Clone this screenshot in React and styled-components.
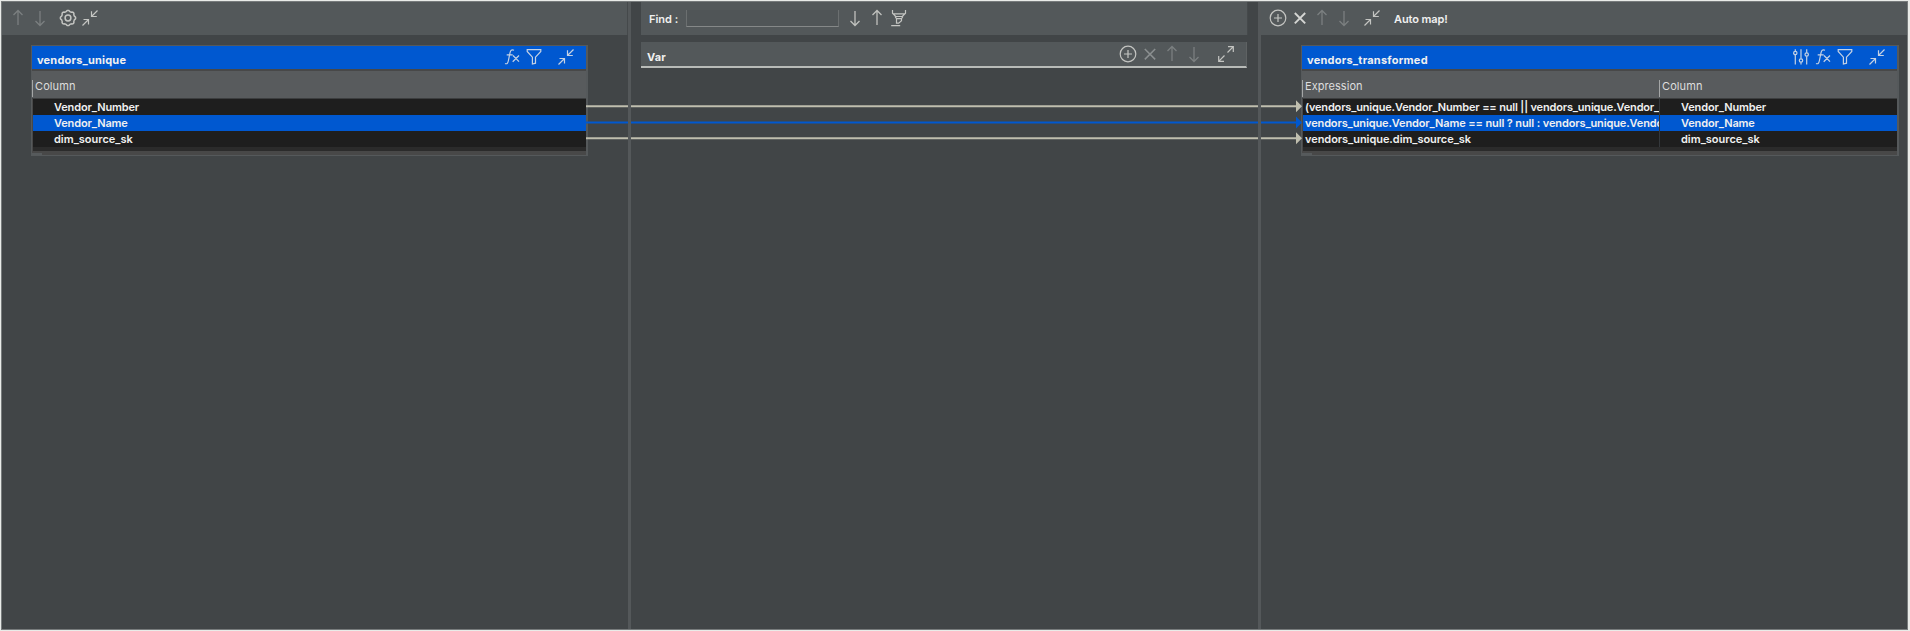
import React from 'react';
import styled, { createGlobalStyle } from 'styled-components';

const GlobalStyle = createGlobalStyle`
  * { box-sizing: border-box; }
  body {
    margin: 0;
    background: #eeeeee;
    font-family: Inter, "Liberation Sans", sans-serif;
    font-size: 11px;
    color: #f0f0f0;
  }
`;

const Frame = styled.div`
  width: 1910px;
  height: 631px;
  background: #e9ebe8;
  padding: 1px 2px 1px 1px;
`;

const Editor = styled.main`
  position: relative;
  display: flex;
  height: 629px;
  border: 1px solid #777b7c;
  background: #414547;
`;

const Pane = styled.section`
  width: ${(p) => p.$width}px;
  flex: none;
  padding: 0 ${(p) => p.$inset || 0}px;
`;

const Splitter = styled.div`
  position: relative;
  z-index: 2;
  width: 3px;
  flex: none;
  background: #54585a;
`;

const Toolbar = styled.header`
  display: flex;
  align-items: center;
  height: 33px;
  padding-left: ${(p) => p.$start}px;
  padding-bottom: 1px;
  background: #53585a;
  border-right: ${(p) => (p.$edge ? '1px solid #45494b' : 'none')};
`;

const Icon = styled.svg`
  flex: none;
  display: block;
  width: 18px;
  height: 18px;
  margin-left: ${(p) => p.$gap ?? 4}px;
  fill: none;
  stroke: ${(p) => p.$tone || '#c4c5c2'};
  stroke-width: ${(p) => p.$weight || 1.2};
`;

const Label = styled.span`
  font-weight: ${(p) => p.$weight || 500};
  letter-spacing: ${(p) => p.$track || 0}px;
  margin-left: ${(p) => p.$gap || 0}px;
  padding-top: ${(p) => p.$drop || 0}px;
  white-space: pre;
`;

const FindField = styled.input`
  width: 153px;
  height: 17px;
  margin: 0 0 0 8px;
  padding: 0 4px;
  background: #505557;
  color: inherit;
  border: 1px solid #6b6f70;
  border-top: 0;
  border-bottom-color: #858888;
  outline: none;
`;

const VarBar = styled.div`
  display: flex;
  align-items: center;
  height: 26px;
  margin: 7px 0 0;
  padding: 0 11px 0 6px;
  width: 606px;
  background: #53585a;
  border-bottom: 2px solid #b8bbb8;
  border-right: 1px solid #5e6263;
`;

const Spacer = styled.div`
  flex: 1;
`;

const Table = styled.div`
  width: ${(p) => p.$width}px;
  height: 111px;
  margin: 10px 0 0 ${(p) => p.$left}px;
  border: 1px solid #55595b;
  border-right-width: 2px;
  background: #484848;
`;

const TitleBar = styled.div`
  display: flex;
  align-items: center;
  height: 23px;
  padding: 0 11px 1px 5px;
  background: #0058d0;
`;

const HeadRow = styled.div`
  display: grid;
  grid-template-columns: ${(p) => p.$columns};
  height: 28px;
  margin-top: 2px;
  padding-top: 9px;
  background: #585b5d;
  border-bottom: 1px solid #3c3e3f;
`;

const HeadCell = styled.div`
  height: 17px;
  padding-left: 2px;
  line-height: 12px;
  border-left: 1px solid #a4a6a6;
  color: #dedede;
`;

const Rows = styled.div`
  height: 52px;
  margin-left: 1px;
  background: #2b2b2b;
`;

const Row = styled.div`
  display: grid;
  grid-template-columns: ${(p) => p.$columns};
  height: 16px;
  line-height: 17px;
  background: ${(p) => (p.$selected ? '#0058d0' : '#1e1e1e')};
`;

const Cell = styled.div`
  min-width: 0;
  overflow: hidden;
  white-space: nowrap;
  padding-left: ${(p) => p.$indent}px;
  border-right: ${(p) => (p.$divided ? '1px solid #34383c' : 'none')};
`;

const ScrollThumb = styled.div`
  width: 10px;
  height: 2px;
  margin-top: 2px;
  background: #565a5c;
`;

const Links = styled.svg`
  position: absolute;
  left: 584px;
  top: 96px;
  width: 718px;
  height: 50px;
  pointer-events: none;
`;

const Arrow = ({ down, dim, gap }) => (
  <Icon viewBox="0 0 18 18" $gap={gap} $tone={dim ? '#7b7f80' : '#c0c1be'} $weight={1.3}>
    <path d={down ? 'M9 2v14.5M4.5 12l4.5 4.5 4.5-4.5' : 'M9 16V1.5M4.5 6L9 1.5 13.5 6'} />
  </Icon>
);

const Collapse = ({ gap, tone }) => (
  <Icon viewBox="0 0 18 18" $gap={gap} $tone={tone}>
    <path d="M1.5 16.5l6-6M2.5 10.5h5v5M16.5 1.5l-6 6M10.5 2.2v5.3h5.3" />
  </Icon>
);

const Expand = ({ gap }) => (
  <Icon viewBox="0 0 18 18" $gap={gap}>
    <path d="M1.7 16.3L7.5 10.5M1.7 11v5.3H7M16.3 1.7l-5.8 5.8M11 1.7h5.3V7" />
  </Icon>
);

const Add = ({ gap }) => (
  <Icon viewBox="0 0 18 18" $gap={gap}>
    <circle cx="9" cy="9" r="7.8" />
    <path d="M9 5v8M5 9h8" />
  </Icon>
);

const Remove = ({ dim }) => (
  <Icon viewBox="0 0 18 18" $tone={dim ? '#8b8f90' : '#d4d5d3'} $weight={dim ? 1.5 : 1.9}>
    <path d="M3.8 4l10.4 10.4M14.2 4L3.8 14.4" />
  </Icon>
);

const gearPath = Array.from({ length: 64 }, (_, i) => {
  const angle = (i / 64) * Math.PI * 2;
  const wave = Math.cos(angle * 8);
  const radius = 7.1 + Math.max(-0.5, Math.min(0.5, wave * 1.3));
  return `${i ? 'L' : 'M'}${(9 + radius * Math.cos(angle)).toFixed(2)} ${(9 + radius * Math.sin(angle)).toFixed(2)}`;
}).join('') + 'Z';

const Gear = ({ gap }) => (
  <Icon viewBox="0 0 18 18" $gap={gap} $weight={1.5}>
    <path d={gearPath} />
    <circle cx="9" cy="9" r="2.9" />
  </Icon>
);

const Marker = () => (
  <Icon viewBox="0 0 18 18" $gap={4}>
    <path d="M2.5 1v3.2l3.2 3.3h6.6l3.2-3.3V1M2.8 4.8h12.4M5 7.5l1.5 2.2h5L13 7.5M6.5 9.7v4.5h2.2l2.8-2.5v-2M1.2 16.6h9" />
  </Icon>
);

const Fx = ({ gap }) => (
  <Icon viewBox="0 0 18 18" $gap={gap} $tone="#c5d2e4">
    <path d="M11 2.2c-2.5-.9-3.5.2-4 2.7L5.3 13c-.5 2.5-1.4 3.2-3.3 2.5M3.7 6.9h6M10 7.5l6 6.2M16 7.5l-6.3 6.2" />
  </Icon>
);

const Funnel = () => (
  <Icon viewBox="0 0 18 18" $tone="#c5d2e4">
    <path d="M2.2 1.7h13.6v1.8l-5.3 5.7v6L7.4 16V9.2L2.2 3.5z" />
  </Icon>
);

const Sliders = () => (
  <Icon viewBox="0 0 18 18" $tone="#c5d2e4">
    <path d="M3.3 1.2v2.1M3.3 6.7v9.8M9 1.2v9.6M9 14.2v2.3M14.7 1.2v3.6M14.7 8.2v8.3" />
    <circle cx="3.3" cy="5" r="1.7" />
    <circle cx="9" cy="12.5" r="1.7" />
    <circle cx="14.7" cy="6.5" r="1.7" />
  </Icon>
);

const sourceRows = [
  { name: 'Vendor_Number', track: -0.13 },
  { name: 'Vendor_Name', track: -0.13 },
  { name: 'dim_source_sk', track: 0 },
];

const expressions = [
  { text: '(vendors_unique.Vendor_Number == null || vendors_unique.Vendor_', track: -0.17 },
  { text: 'vendors_unique.Vendor_Name == null ? null : vendors_unique.Vendo', track: -0.12 },
  { text: 'vendors_unique.dim_source_sk', track: -0.05 },
];

const links = [
  { y: 8.2, color: '#bfbeae' },
  { y: 24.4, color: '#0058d0' },
  { y: 40.2, color: '#bfbeae' },
];

export default function App() {
  return (
    <>
      <GlobalStyle />
      <Frame>
        <Editor>
          <Pane $width={626}>
            <Toolbar $start={7} $edge>
              <Arrow dim gap={0} />
              <Arrow dim down />
              <Gear gap={10} />
              <Collapse gap={4} />
            </Toolbar>
            <Table $width={557} $left={29}>
              <TitleBar>
                <Label $weight={700} $track={0.2} $drop={5}>vendors_unique</Label>
                <Spacer />
                <Fx />
                <Funnel />
                <Collapse gap={14} tone="#c5d2e4" />
              </TitleBar>
              <HeadRow $columns="1fr">
                <HeadCell><Label $weight={400} $track={0.1}>Column</Label></HeadCell>
              </HeadRow>
              <Rows>
                {sourceRows.map(({ name, track }, i) => (
                  <Row key={name} $columns="1fr" $selected={i === 1}>
                    <Cell $indent={21}><Label $weight={600} $track={track}>{name}</Label></Cell>
                  </Row>
                ))}
              </Rows>
              <ScrollThumb />
            </Table>
          </Pane>
          <Splitter />
          <Pane $width={627} $inset={10}>
            <Toolbar $start={8} $edge>
              <Label $weight={600} $drop={1}>Find :</Label>
              <FindField aria-label="Find" />
              <Arrow down gap={7} />
              <Arrow />
              <Marker />
            </Toolbar>
            <VarBar>
              <Label $weight={700} $track={0.2} $drop={6}>Var</Label>
              <Spacer />
              <Add />
              <Remove dim />
              <Arrow dim />
              <Arrow dim down />
              <Expand gap={14} />
            </VarBar>
          </Pane>
          <Splitter />
          <Pane $width={646}>
            <Toolbar $start={8}>
              <Add gap={0} />
              <Remove />
              <Arrow dim />
              <Arrow dim down />
              <Collapse gap={10} />
              <Label $weight={600} $gap={13} $track={-0.1} $drop={1}>Auto map!</Label>
            </Toolbar>
            <Table $width={598} $left={40}>
              <TitleBar>
                <Label $weight={700} $track={0.25} $drop={5}>vendors_transformed</Label>
                <Spacer />
                <Sliders />
                <Fx />
                <Funnel />
                <Collapse gap={14} tone="#c5d2e4" />
              </TitleBar>
              <HeadRow $columns="357px 1fr">
                <HeadCell><Label $weight={400} $track={0.05}>Expression</Label></HeadCell>
                <HeadCell><Label $weight={400} $track={0.1}>Column</Label></HeadCell>
              </HeadRow>
              <Rows>
                {sourceRows.map(({ name, track }, i) => (
                  <Row key={name} $columns="357px 1fr" $selected={i === 1}>
                    <Cell $indent={2} $divided>
                      <Label $weight={600} $track={expressions[i].track}>{expressions[i].text}</Label>
                    </Cell>
                    <Cell $indent={21}><Label $weight={600} $track={track}>{name}</Label></Cell>
                  </Row>
                ))}
              </Rows>
              <ScrollThumb />
            </Table>
          </Pane>
          <Links viewBox="0 0 718 50">
            {links.map(({ y, color }) => (
              <g key={y} fill={color} stroke={color}>
                <path d={`M0 ${y}H712`} strokeWidth="2" />
                <path d={`M710 ${y - 6}l6 6-6 6z`} stroke="none" />
              </g>
            ))}
          </Links>
        </Editor>
      </Frame>
    </>
  );
}
